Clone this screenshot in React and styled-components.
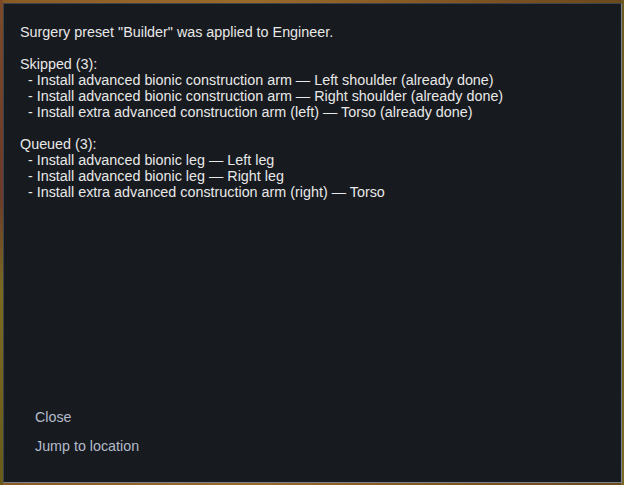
import React from "react";
import styled, { createGlobalStyle } from "styled-components";

const Global = createGlobalStyle`
  html, body { margin: 0; padding: 0; }
  body {
    width: 624px;
    height: 485px;
    overflow: hidden;
    font-family: "Liberation Sans", Arial, sans-serif;
    background: #6e4a22;
  }
`;

const MapBackdrop = styled.div`
  width: 624px;
  height: 485px;
  padding: 3px 2px 2px 3px;
  box-sizing: border-box;
  background:
    linear-gradient(180deg, #7a4a2a 0%, #6b3a2a 40%, #7a6a20 60%, #6a5a1a 100%) left / 3px 100% no-repeat,
    linear-gradient(180deg, #6b5a22 0%, #7a6a28 100%) right / 3px 100% no-repeat,
    linear-gradient(90deg, #8a5a26, #9a6a2a 40%, #7a5020 80%, #6a4a1c);
`;

const Window = styled.div`
  width: 619px;
  height: 480px;
  box-sizing: border-box;
  background: #171a1f;
  border-top: 1px solid #3d434b;
  border-left: 1px solid #3d434b;
  border-right: 1px solid #7b838e;
  border-bottom: 1px solid #7b838e;
  display: flex;
  flex-direction: column;
  justify-content: space-between;
  padding: 20px 16px 28px 16px;
`;

const Message = styled.div`
  color: #e8e8e8;
  font-size: 14.35px;
  line-height: 16px;
  white-space: pre;
`;

const Buttons = styled.div`
  display: flex;
  flex-direction: column;
  gap: 13px;
  padding-left: 15px;
`;

const TextButton = styled.button`
  all: unset;
  color: #b3bccb;
  font-family: "Liberation Sans", Arial, sans-serif;
  font-size: 14.3px;
  line-height: 16px;
  cursor: pointer;
`;

const message = `Surgery preset "Builder" was applied to Engineer.

Skipped (3):
  - Install advanced bionic construction arm — Left shoulder (already done)
  - Install advanced bionic construction arm — Right shoulder (already done)
  - Install extra advanced construction arm (left) — Torso (already done)

Queued (3):
  - Install advanced bionic leg — Left leg
  - Install advanced bionic leg — Right leg
  - Install extra advanced construction arm (right) — Torso`;

export default function App() {
  return (
    <>
      <Global />
      <MapBackdrop>
        <Window>
          <Message>{message}</Message>
          <Buttons>
            <TextButton>Close</TextButton>
            <TextButton>Jump to location</TextButton>
          </Buttons>
        </Window>
      </MapBackdrop>
    </>
  );
}
